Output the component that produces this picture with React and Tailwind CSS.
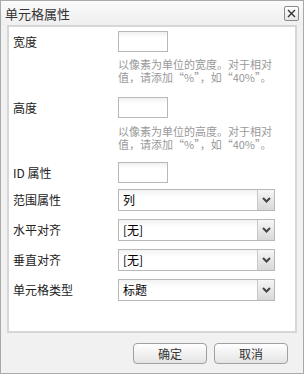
const font = { fontFamily: '"Noto Sans CJK SC", "Noto Sans", sans-serif' };

const Chevron = () => (
  <svg width="9" height="6" viewBox="0 0 9 6">
    <path d="M1 1 L4.5 4.5 L8 1" fill="none" stroke="#444" strokeWidth="2" />
  </svg>
);

const TextBox = () => (
  <div className="w-[50px] h-[21px] border border-[#b8b8b8] bg-gradient-to-b from-[#f0f0f0] to-white to-[30%]" />
);

const Select = ({ value }) => (
  <div className="flex w-[157px] h-[22px] border border-[#b8b8b8] bg-gradient-to-b from-[#f2f2f2] to-white to-[35%]">
    <div className="flex-1 flex items-center pl-[4px] text-[12px] leading-none text-black">{value}</div>
    <div className="w-[17px] flex items-center justify-center border-l border-[#c8c8c8] bg-gradient-to-b from-[#f6f6f6] to-[#d8d8d8]">
      <Chevron />
    </div>
  </div>
);

const Help = ({ lines }) => (
  <div className="ml-[105px] text-[11px] leading-[13px] text-[#999] whitespace-nowrap">
    {lines.map((l) => (
      <div key={l}>{l}</div>
    ))}
  </div>
);

const Row = ({ label, children, className = '' }) => (
  <div className={`flex items-center ${className}`}>
    <div className="w-[105px] text-[12px] leading-[16px] text-[#222]">{label}</div>
    {children}
  </div>
);

const Button = ({ children }) => (
  <div className="w-[74px] h-[21px] flex items-center justify-center rounded-[4px] border border-[#a0a0a0] bg-gradient-to-b from-white to-[#e4e4e4] text-[12px] leading-none text-[#333]">
    {children}
  </div>
);

export default function App() {
  return (
    <div style={font} className="w-[305px] h-[375px] bg-white">
      <div className="w-[304px] h-[374px] flex flex-col border border-[#a9a9a9] bg-[#f1f1f1]">
        <div className="h-[24px] shrink-0 flex items-center justify-between pl-[4px] pr-[4px] bg-gradient-to-b from-[#fafafa] to-[#efefef]">
          <div className="text-[13px] leading-none text-[#333]">单元格属性</div>
          <div className="w-[15px] h-[15px] mt-[1px] flex items-center justify-center rounded-[2px] border border-[#8a8a8a] bg-gradient-to-b from-white to-[#e6e6e6]">
            <svg width="9" height="9" viewBox="0 0 9 9">
              <path d="M1 1 L8 8 M8 1 L1 8" stroke="#333" strokeWidth="1.4" />
            </svg>
          </div>
        </div>
        <div className="mx-[6px] h-[308px] shrink-0 border-2 border-[#d6d6d6] bg-white px-[4px] pt-[4px]">
          <Row label="宽度">
            <TextBox />
          </Row>
          <div className="mt-[6px]">
            <Help lines={['以像素为单位的宽度。对于相对', '值，请添加“%”，如“40%”。']} />
          </div>
          <Row label="高度" className="mt-[13px]">
            <TextBox />
          </Row>
          <div className="mt-[7px]">
            <Help lines={['以像素为单位的高度。对于相对', '值，请添加“%”，如“40%”。']} />
          </div>
          <Row label="ID 属性" className="mt-[11px]">
            <TextBox />
          </Row>
          <Row label="范围属性" className="mt-[6px]">
            <Select value="列" />
          </Row>
          <Row label="水平对齐" className="mt-[8px]">
            <Select value="[无]" />
          </Row>
          <Row label="垂直对齐" className="mt-[8px]">
            <Select value="[无]" />
          </Row>
          <Row label="单元格类型" className="mt-[8px]">
            <Select value="标题" />
          </Row>
        </div>
        <div className="flex justify-end gap-[7px] pr-[15px] mt-[10px]">
          <Button>确定</Button>
          <Button>取消</Button>
        </div>
      </div>
    </div>
  );
}
